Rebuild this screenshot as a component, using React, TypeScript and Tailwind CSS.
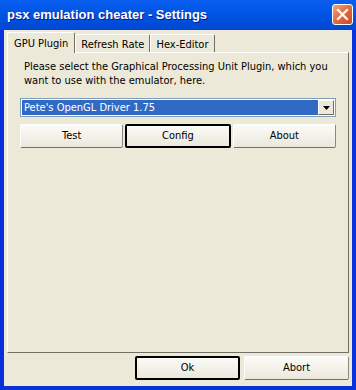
import React from "react";

const font = { fontFamily: '"DejaVu Sans Condensed", "DejaVu Sans", sans-serif' };

const XpButton = ({ label, active }: { label: string; active?: boolean }) => (
  <button
    className={
      active
        ? "flex-1 h-[24px] rounded-[2px] border-2 border-black bg-gradient-to-b from-[#fbfbf7] to-[#ebe8dc] text-[11px] text-black"
        : "flex-1 h-[24px] rounded-[2px] border border-t-white border-l-white border-r-[#8a8a84] border-b-[#716f64] bg-gradient-to-b from-[#fbfbf7] to-[#ebe8dc] text-[11px] text-black"
    }
  >
    {label}
  </button>
);

const Tab = ({ label, selected }: { label: string; selected?: boolean }) => (
  <div
    className={
      selected
        ? "h-[21px] px-[6px] pt-[3px] bg-[#ece9d8] border border-b-0 border-t-white border-l-white border-r-[#716f64] rounded-t-[2px] text-[11px] -mb-px z-10 -ml-[2px]"
        : "h-[18px] mt-[3px] px-[5px] pt-[2px] bg-[#ece9d8] border border-b-0 border-t-white border-l-white border-r-[#716f64] rounded-t-[2px] text-[11px]"
    }
  >
    {label}
  </div>
);

export default function App() {
  return (
    <div className="w-[356px] h-[390px] flex flex-col bg-[#0831d9] text-black" style={font}>
      <div className="h-[30px] flex items-center justify-between pl-[7px] pr-[3px] pb-[1px] bg-gradient-to-b from-[#0a5ef0] via-[#0054e3] to-[#0046d2]">
        <span className="text-white font-bold text-[13px]" style={{ fontFamily: '"Liberation Sans", Arial, sans-serif', textShadow: "1px 1px #0a1883" }}>
          psx emulation cheater - Settings
        </span>
        <div className="w-[21px] h-[21px] rounded-[3px] border border-white bg-gradient-to-br from-[#f0a583] via-[#e2683f] to-[#cc4a1f] flex items-center justify-center">
          <svg width="13" height="13" viewBox="0 0 13 13">
            <path d="M2 2 L11 11 M11 2 L2 11" stroke="white" strokeWidth="2.2" strokeLinecap="square" />
          </svg>
        </div>
      </div>
      <div className="flex-1 mx-[4px] mb-[4px] bg-[#ece9d8] flex flex-col pt-[1px] px-[3px]">
        <div className="flex pl-[2px] items-end">
          <Tab label="GPU Plugin" selected />
          <Tab label="Refresh Rate" />
          <Tab label="Hex-Editor" />
        </div>
        <div className="h-[301px] border border-t-white border-l-white border-r-[#716f64] border-b-[#716f64] bg-[#ece9d8] px-[12px] pt-[7px]">
          <p className="text-[11px] leading-[14px] pl-[4px]">
            Please select the Graphical Processing Unit Plugin, which you want to use with the emulator, here.
          </p>
          <div className="mt-[10px] h-[19px] border border-[#7f9db9] bg-white flex p-[1px]">
            <div className="flex-1 bg-[#316ac5] text-white text-[11px] leading-[15px] pl-[2px]">Pete's OpenGL Driver 1.75</div>
            <div className="w-[16px] bg-[#ece9d8] border border-t-white border-l-white border-r-[#716f64] border-b-[#716f64] flex items-center justify-center">
              <svg width="7" height="4" viewBox="0 0 7 4"><path d="M0 0H7L3.5 4Z" fill="black" /></svg>
            </div>
          </div>
          <div className="mt-[7px] flex gap-[2px]">
            <XpButton label="Test" />
            <XpButton label="Config" active />
            <XpButton label="About" />
          </div>
        </div>
        <div className="flex justify-end gap-[4px] mt-[3px]">
          <div className="w-[105px] flex"><XpButton label="Ok" active /></div>
          <div className="w-[105px] flex"><XpButton label="Abort" /></div>
        </div>
      </div>
    </div>
  );
}
